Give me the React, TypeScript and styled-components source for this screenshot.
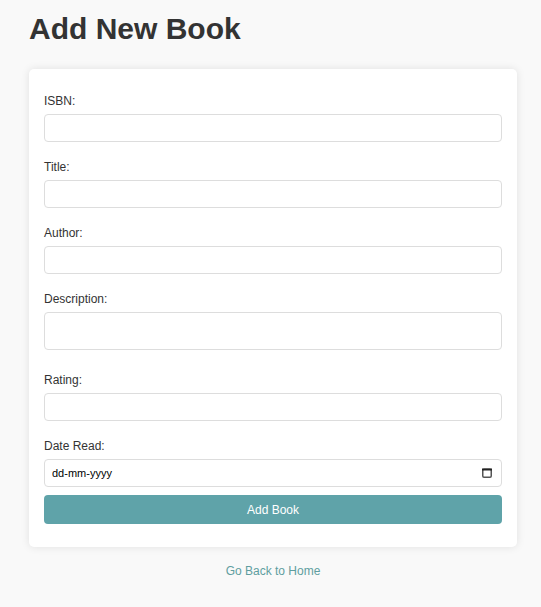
import React from "react";
import styled, { createGlobalStyle } from "styled-components";

const Global = createGlobalStyle`
  html, body { margin: 0; padding: 0; background: #f9f9f9; }
  body { font-family: Arial, "Liberation Sans", sans-serif; color: #333; }
  * { box-sizing: border-box; }
`;

const Page = styled.div`
  width: 488px;
  margin-left: 29px;
  padding-top: 12px;
`;

const Heading = styled.h1`
  margin: 0 0 23px;
  font-size: 30px;
  line-height: 34px;
  font-weight: bold;
  color: #333;
`;

const Card = styled.form`
  background: #fff;
  border-radius: 5px;
  box-shadow: 0 0 8px rgba(0, 0, 0, 0.1);
  padding: 25px 15px 23px;
  display: flex;
  flex-direction: column;
`;

const Group = styled.div<{ $last?: boolean }>`
  display: flex;
  flex-direction: column;
  margin-bottom: ${(p) => (p.$last ? "8px" : "18px")};
`;

const Label = styled.label`
  font-size: 12px;
  line-height: 14px;
  color: #333;
  margin-bottom: 6px;
`;

const Input = styled.input`
  width: 100%;
  height: 28px;
  border: 1px solid #ddd;
  border-radius: 4px;
  padding: 0 7px;
  font-family: Arial, "Liberation Sans", sans-serif;
  font-size: 11px;
  color: #000;
  background: #fff;
  outline: none;
  &::placeholder { color: #000; opacity: 1; }
`;

const DateWrap = styled.div`
  position: relative;
`;

const CalIcon = styled.svg`
  position: absolute;
  right: 10px;
  top: 9px;
  pointer-events: none;
`;

const TextArea = styled.textarea`
  width: 100%;
  height: 38px;
  border: 1px solid #ddd;
  border-radius: 4px;
  padding: 6px 7px;
  font-family: Arial, "Liberation Sans", sans-serif;
  font-size: 12px;
  resize: none;
  outline: none;
  display: block;
  margin-bottom: 5px;
`;

const Button = styled.button`
  width: 100%;
  height: 29px;
  border: none;
  border-radius: 4px;
  background: #5fa3a9;
  color: #fff;
  font-family: Arial, "Liberation Sans", sans-serif;
  font-size: 12px;
  cursor: pointer;
`;

const BackLink = styled.a`
  display: block;
  text-align: center;
  margin-top: 17px;
  font-size: 12px;
  line-height: 14px;
  color: #5f9ea0;
  text-decoration: none;
`;

export default function App() {
  return (
    <>
      <Global />
      <Page>
        <Heading>Add New Book</Heading>
        <Card onSubmit={(e) => e.preventDefault()}>
          <Group>
            <Label>ISBN:</Label>
            <Input type="text" />
          </Group>
          <Group>
            <Label>Title:</Label>
            <Input type="text" />
          </Group>
          <Group>
            <Label>Author:</Label>
            <Input type="text" />
          </Group>
          <Group>
            <Label>Description:</Label>
            <TextArea />
          </Group>
          <Group>
            <Label>Rating:</Label>
            <Input type="number" />
          </Group>
          <Group $last>
            <Label>Date Read:</Label>
            <DateWrap>
              <Input type="text" placeholder="dd-mm-yyyy" />
              <CalIcon width="10" height="10" viewBox="0 0 10 10">
                <rect x="0.75" y="1.25" width="8.5" height="8" rx="1.2" fill="none" stroke="#555" strokeWidth="1.5" />
                <rect x="0" y="0.5" width="10" height="2" fill="#222" />
              </CalIcon>
            </DateWrap>
          </Group>
          <Button type="submit">Add Book</Button>
        </Card>
        <BackLink href="#">Go Back to Home</BackLink>
      </Page>
    </>
  );
}
